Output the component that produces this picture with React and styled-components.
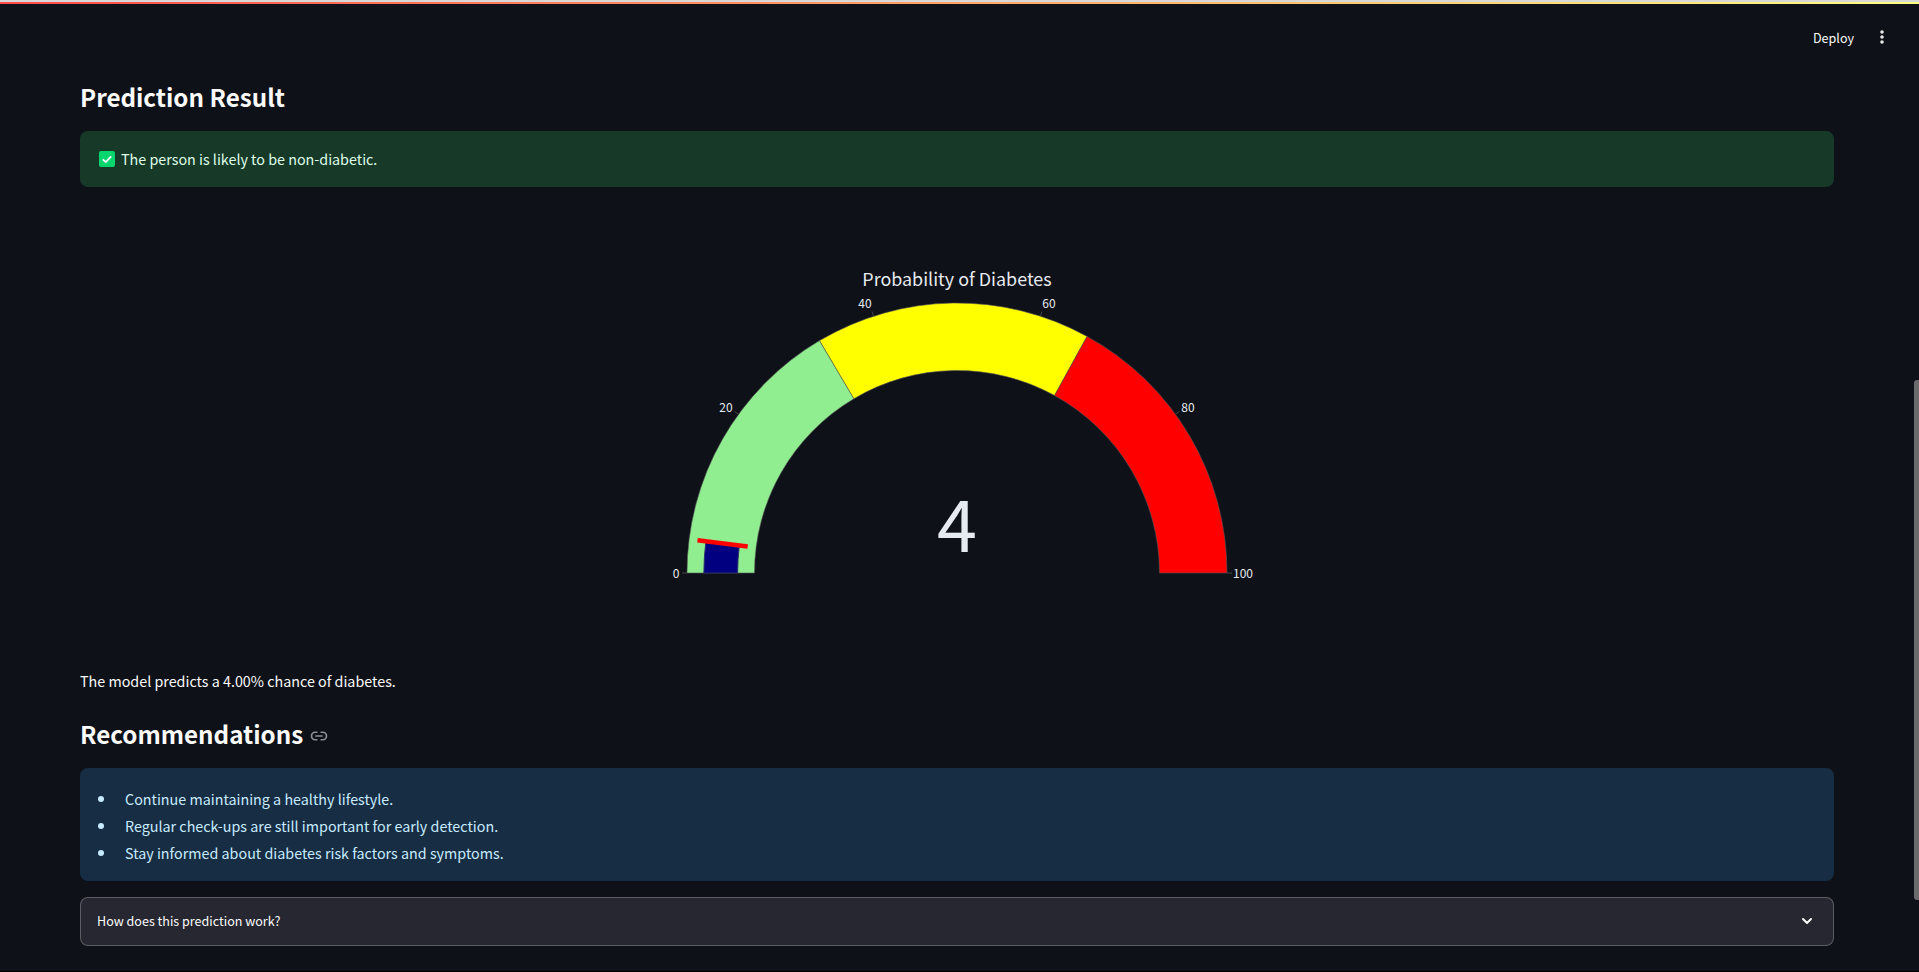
import React from 'react'
import styled, { createGlobalStyle } from 'styled-components'
import { Link2, ChevronDown } from 'lucide-react'

const GlobalStyle = createGlobalStyle`
  html, body {
    margin: 0;
    height: 100%;
    overflow: hidden;
    background: #0e1117;
  }
  * {
    box-sizing: border-box;
  }
`

const Page = styled.div`
  position: relative;
  height: 972px;
  overflow: hidden;
  background: #0e1117;
  color: #fafafa;
  font-family: "Noto Sans CJK SC", "Liberation Sans", sans-serif;
  font-size: 14.32px;
  border-bottom: 1px solid #000;
`

const Stripe = styled.div`
  height: 4px;
  border-top: 2px solid #d8d8d8;
  background: linear-gradient(90deg, #ff4b4b, #fffd80);
`

const Header = styled.header`
  display: flex;
  justify-content: flex-end;
  align-items: center;
  height: 60px;
  gap: 26px;
  padding: 6px 35px 0 0;
`

const Deploy = styled.span`
  font-size: 12.55px;
  line-height: 20px;
  margin-top: 1px;
  color: #fafafa;
`

const Dots = styled.svg`
  width: 4px;
  height: 14px;
  margin-top: -1px;
  fill: #e8e8e8;
`

const Main = styled.main`
  display: flex;
  flex-direction: column;
  padding: 0 85px 0 80px;
`

const Heading = styled.h3`
  display: flex;
  align-items: center;
  gap: 8px;
  margin: ${(p) => p.$top}px 0 0;
  font-size: 24.2px;
  line-height: 36px;
  font-weight: 600;
  color: #fafafa;
`

const LinkIcon = styled(Link2)`
  width: 18px;
  height: 18px;
  margin-top: 4px;
  margin-left: -1px;
  stroke-width: 2.3;
  color: #8b8d93;
`

const Alert = styled.div`
  display: flex;
  align-items: center;
  border-radius: 8px;
  background: ${(p) => p.$bg};
  color: ${(p) => p.$color};
  line-height: 24px;
`

const SuccessAlert = styled(Alert)`
  height: 56px;
  margin-top: 16px;
  padding: 0 19px;
  gap: 6px;
`

const InfoAlert = styled(Alert)`
  height: 113px;
  margin-top: 16px;
`

const Check = styled.svg`
  width: 16px;
  height: 16px;
  flex: none;
`

const Bullets = styled.ul`
  margin: 0;
  padding: 2px 0 0 18px;
  list-style: none;
`

const Bullet = styled.li`
  display: flex;
  align-items: center;
  gap: 21px;
  height: 27px;
  line-height: 27px;

  &::before {
    content: '';
    flex: none;
    width: 6px;
    height: 6px;
    border-radius: 50%;
    background: #c7ebff;
  }
`

const Chart = styled.svg`
  display: block;
  margin-top: 16px;
  width: 1754px;
  height: 450px;
  text {
    font-family: "Noto Sans CJK SC", "Liberation Sans", sans-serif;
    fill: #e6eaf1;
  }
`

const Paragraph = styled.p`
  margin: 16px 0 0;
  line-height: 24px;
  color: #fafafa;
`

const Expander = styled.div`
  display: flex;
  justify-content: space-between;
  align-items: center;
  height: 49px;
  margin-top: 16px;
  padding: 0 19px 2px 16px;
  border: 1px solid rgba(250, 250, 250, 0.25);
  border-radius: 8px;
  background: #262730;
  font-size: 12.55px;
  line-height: 20px;
  color: #fafafa;
`

const Chevron = styled(ChevronDown)`
  width: 16px;
  height: 16px;
  stroke-width: 3;
  margin-right: -1px;
  color: #fafafa;
`

const Scrollbar = styled.div`
  position: absolute;
  top: 380px;
  right: 0;
  width: 5px;
  height: 520px;
  border-radius: 3px 0 0 3px;
  background: #6b6b6d;
`

const CX = 877
const CY = 370
const OUTER = 270
const INNER = 202.5

const polar = (value, r) => {
  const a = ((180 - value * 1.8) * Math.PI) / 180
  return [CX + r * Math.cos(a), CY - r * Math.sin(a)]
}

const band = (from, to, r0, r1) => {
  const [ax, ay] = polar(from, r1)
  const [bx, by] = polar(to, r1)
  const [cx, cy] = polar(to, r0)
  const [dx, dy] = polar(from, r0)
  return `M${ax} ${ay} A${r1} ${r1} 0 0 1 ${bx} ${by} L${cx} ${cy} A${r0} ${r0} 0 0 0 ${dx} ${dy} Z`
}

const steps = [
  { from: 0, to: 33, color: '#90ee90' },
  { from: 33, to: 66, color: '#ffff00' },
  { from: 66, to: 100, color: '#ff0000' }
]

// label spots, read off the reference
const ticks = [
  { value: 0, x: CX - 281, y: 375 },
  { value: 20, x: CX - 231, y: 209 },
  { value: 40, x: CX - 92, y: 105 },
  { value: 60, x: CX + 92, y: 105 },
  { value: 80, x: CX + 231, y: 209 },
  { value: 100, x: CX + 286, y: 375 }
]

function Gauge () {
  const [lx0, ly0] = polar(4, 211)
  const [lx1, ly1] = polar(4, 261.6)

  return (
    <Chart viewBox='0 0 1754 450'>
      <text x={CX} y={83} textAnchor='middle' fontSize='17.9'>Probability of Diabetes</text>
      {steps.map((s) => (
        <path key={s.from} d={band(s.from, s.to, INNER, OUTER)} fill={s.color} stroke='#555' strokeWidth='0.6' />
      ))}
      <path d={band(0, 4, 219.4, 253.1)} fill='#000080' stroke='#2c2f6b' strokeWidth='1' />
      <line x1={lx0} y1={ly0} x2={lx1} y2={ly1} stroke='#ff0000' strokeWidth='4.5' />
      {ticks.map((t) => {
        const [x0, y0] = polar(t.value, OUTER)
        const [x1, y1] = polar(t.value, OUTER + 5)
        return (
          <g key={t.value}>
            <line x1={x0} y1={y0} x2={x1} y2={y1} stroke='#444' strokeWidth='1' />
            <text x={t.x} y={t.y} textAnchor='middle' fontSize='12'>{t.value}</text>
          </g>
        )
      })}
      <text x={CX} y={349} textAnchor='middle' fontSize='72'>4</text>
    </Chart>
  )
}

function App () {
  return (
    <Page>
      <GlobalStyle />
      <Stripe />
      <Header>
        <Deploy>Deploy</Deploy>
        <Dots viewBox='0 0 4 14'>
          <circle cx='2' cy='2' r='1.8' />
          <circle cx='2' cy='7' r='1.8' />
          <circle cx='2' cy='12' r='1.8' />
        </Dots>
      </Header>
      <Main>
        <Heading $top={15}>Prediction Result</Heading>
        <SuccessAlert $bg='#173928' $color='#dffde9'>
          <Check viewBox='0 0 16 16'>
            <rect width='16' height='16' rx='2' fill='#06d66e' />
            <path d='M3.8 8.4 L6.8 11 L12.2 5.4' fill='none' stroke='#fff' strokeWidth='1.8' />
          </Check>
          The person is likely to be non-diabetic.
        </SuccessAlert>
        <Gauge />
        <Paragraph>The model predicts a 4.00% chance of diabetes.</Paragraph>
        <Heading $top={23}>
          Recommendations
          <LinkIcon />
        </Heading>
        <InfoAlert $bg='#172d43' $color='#c7ebff'>
          <Bullets>
            <Bullet>Continue maintaining a healthy lifestyle.</Bullet>
            <Bullet>Regular check-ups are still important for early detection.</Bullet>
            <Bullet>Stay informed about diabetes risk factors and symptoms.</Bullet>
          </Bullets>
        </InfoAlert>
        <Expander>
          How does this prediction work?
          <Chevron />
        </Expander>
      </Main>
      <Scrollbar />
    </Page>
  )
}

export default App
